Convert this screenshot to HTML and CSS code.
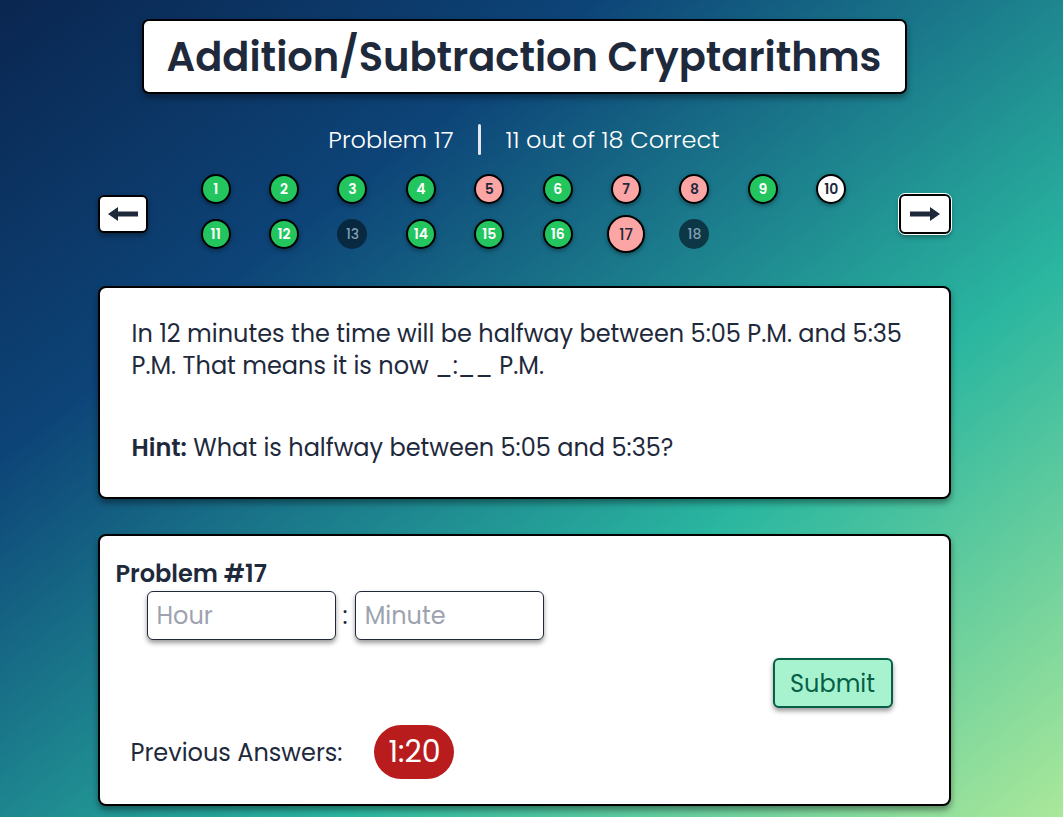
FILE: index.html
```html
<!DOCTYPE html>
<html>
<head>
<meta charset="utf-8">
<link rel="stylesheet" href="styles.css">
</head>
<body>
<div class="page">
  <div class="title-box"><h1>Addition/Subtraction Cryptarithms</h1></div>
  <div class="status">
    <span>Problem 17</span>
    <span class="divider"></span>
    <span>11 out of 18 Correct</span>
  </div>
  <div class="nav">
    <button class="arrow-btn"><svg width="30" height="14" viewBox="0 0 30 14"><path d="M0 7 L10 0 L10 4.5 L30 4.5 L30 9.5 L10 9.5 L10 14 Z" fill="#1e293b"/></svg></button>
    <div class="grid">
      <span class="dot green">1</span>
      <span class="dot green">2</span>
      <span class="dot green">3</span>
      <span class="dot green">4</span>
      <span class="dot red">5</span>
      <span class="dot green">6</span>
      <span class="dot red">7</span>
      <span class="dot red">8</span>
      <span class="dot green">9</span>
      <span class="dot white">10</span>
      <span class="dot green">11</span>
      <span class="dot green">12</span>
      <span class="dot empty">13</span>
      <span class="dot green">14</span>
      <span class="dot green">15</span>
      <span class="dot green">16</span>
      <span class="dot red current">17</span>
      <span class="dot empty">18</span>
    </div>
    <button class="arrow-btn focus"><svg width="30" height="14" viewBox="0 0 30 14"><path d="M30 7 L20 0 L20 4.5 L0 4.5 L0 9.5 L20 9.5 L20 14 Z" fill="#1e293b"/></svg></button>
  </div>
  <div class="card question">
    <p class="q-text">In 12 minutes the time will be halfway between 5:05 P.M. and 5:35 P.M. That means it is now _:__ P.M.</p>
    <p class="hint"><b>Hint:</b> What is halfway between 5:05 and 5:35?</p>
  </div>
  <div class="card answer">
    <h2>Problem #17</h2>
    <div class="inputs">
      <input class="field" placeholder="Hour">
      <span class="colon">:</span>
      <input class="field" placeholder="Minute">
    </div>
    <div class="submit-row"><button class="submit">Submit</button></div>
    <div class="prev">
      <span>Previous Answers:</span>
      <span class="pill">1:20</span>
    </div>
  </div>
</div>
</body>
</html>
```
FILE: styles.css
```css
html, body {
  margin: 0;
  height: 100%;
}
body {
  font-family: "Poppins", "DejaVu Sans", sans-serif;
  background: linear-gradient(to bottom right, #0a2650 0%, #0d4478 28%, #2ab6a0 66%, #aae89a 100%);
  color: #1e293b;
  overflow: hidden;
  box-sizing: border-box;
  padding-right: 15px;
}
.page {
  width: 853px;
  margin: 0 auto;
  padding-top: 19px;
  display: flex;
  flex-direction: column;
  align-items: center;
}
.title-box {
  background: #fff;
  border: 2px solid #000;
  border-radius: 7px;
  width: 765px;
  height: 75px;
  box-sizing: border-box;
  display: flex;
  align-items: center;
  justify-content: center;
  box-shadow: 0 4px 6px rgba(0,0,0,0.35);
}
.title-box h1 {
  margin: 0;
  font-size: 40px;
  font-weight: 600;
  color: #1e293b;
  line-height: 48px;
}
.status {
  margin-top: 29px;
  display: flex;
  align-items: center;
  color: #fff;
  font-size: 24px;
  font-weight: 300;
  height: 32px;
}
.divider {
  width: 3px;
  height: 31px;
  background: #e2e8f0;
  border-radius: 2px;
  margin: 0 25px 0 24px;
}
.nav {
  margin-top: 19px;
  width: 853px;
  display: flex;
  align-items: center;
}
.arrow-btn {
  flex-shrink: 0;
  width: 50px;
  height: 38px;
  background: #fff;
  border: 2px solid #000;
  border-radius: 6px;
  display: flex;
  align-items: center;
  justify-content: center;
  padding: 0;
  box-shadow: 0 3px 5px rgba(0,0,0,0.35);
  margin-top: 5px;
}
.arrow-btn.focus {
  width: 52px;
  height: 40px;
  outline: 1px solid #fff;
  outline-offset: 0;
  margin-left: 33px;
  margin-top: 5px;
}
.grid {
  flex-shrink: 0;
  margin-left: 34px;
  width: 684px;
  display: grid;
  grid-template-columns: repeat(10, 1fr);
  row-gap: 15px;
  justify-items: center;
  align-items: center;
}
.dot {
  width: 30px;
  height: 30px;
  box-sizing: border-box;
  border-radius: 50%;
  border: 2px solid #000;
  display: flex;
  align-items: center;
  justify-content: center;
  font-size: 14px;
  font-weight: 600;
  box-shadow: 0 2px 4px rgba(0,0,0,0.35);
}
.green { background: #22c55e; color: #fff; }
.red { background: #fca5a5; color: #1e293b; }
.white { background: #fff; color: #1e293b; }
.empty {
  background: rgba(5, 25, 40, 0.7);
  border: none;
  color: rgba(160, 190, 210, 0.8);
  font-weight: 500;
  box-shadow: none;
}
.current {
  width: 38px;
  height: 38px;
  margin: -4px 0;
  font-weight: 500;
  font-size: 15px;
}
.card {
  background: #fff;
  border: 2px solid #000;
  border-radius: 8px;
  width: 853px;
  box-sizing: border-box;
  box-shadow: 0 4px 6px rgba(0,0,0,0.4);
}
.question {
  margin-top: 37px;
  padding: 30px 32px 33px 32px;
  font-size: 24px;
  line-height: 32px;
}
.question p { margin: 0; }
.hint { margin-top: 50px !important; }
.hint b { font-weight: 600; }
.answer {
  margin-top: 35px;
  padding: 22px 16px 24px 16px;
  height: 272px;
}
.answer h2 {
  margin: 0;
  font-size: 24px;
  line-height: 32px;
  font-weight: 600;
}
.inputs {
  margin-top: 1px;
  margin-left: 31px;
  display: flex;
  align-items: center;
  gap: 7px;
}
.field {
  width: 189px;
  height: 49px;
  box-sizing: border-box;
  border: 1px solid #1f2937;
  border-radius: 6px;
  font-family: inherit;
  font-size: 24px;
  padding: 0 9px;
  box-shadow: 0 3px 5px rgba(0,0,0,0.4);
  color: #1e293b;
}
.field::placeholder { color: #9ca3af; }
.colon { font-size: 24px; }
.submit-row {
  display: flex;
  justify-content: flex-end;
  margin-top: 18px;
  padding-right: 40px;
}
.submit {
  width: 120px;
  height: 50px;
  background: #a7f3d0;
  border: 2px solid #065f46;
  border-radius: 6px;
  color: #065f46;
  font-family: inherit;
  font-size: 24px;
  padding: 0;
  box-shadow: 0 3px 5px rgba(0,0,0,0.4);
}
.prev {
  margin-top: 17px;
  margin-left: 15px;
  display: flex;
  align-items: center;
  font-size: 24px;
}
.pill {
  margin-left: 32px;
  background: #b91c1c;
  color: #fff;
  font-size: 30px;
  width: 80px;
  height: 54px;
  border-radius: 27px;
  display: flex;
  align-items: center;
  justify-content: center;
}
```
